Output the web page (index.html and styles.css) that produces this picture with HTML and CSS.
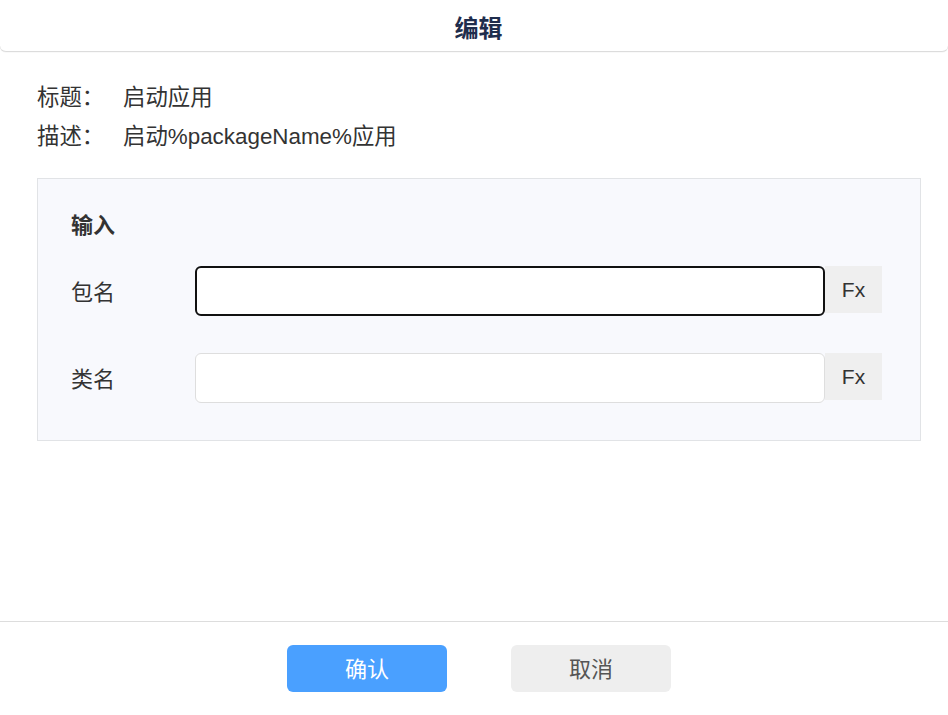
FILE: index.html
```html
<!DOCTYPE html>
<html lang="zh">
<head>
<meta charset="utf-8">
<title>编辑</title>
<link rel="stylesheet" href="styles.css">
</head>
<body>
<div class="page">
  <header class="header">编辑</header>
  <div class="content">
    <div class="info">
      <div class="info-row"><span class="info-label">标题：</span><span>启动应用</span></div>
      <div class="info-row"><span class="info-label">描述：</span><span>启动%packageName%应用</span></div>
    </div>
    <section class="panel">
      <div class="panel-title">输入</div>
      <div class="field">
        <label class="field-label">包名</label>
        <div class="input focused"></div>
        <div class="fx">Fx</div>
      </div>
      <div class="field">
        <label class="field-label">类名</label>
        <div class="input"></div>
        <div class="fx">Fx</div>
      </div>
    </section>
  </div>
  <footer class="footer">
    <button class="btn btn-primary">确认</button>
    <button class="btn btn-default">取消</button>
  </footer>
</div>
</body>
</html>
```

FILE: styles.css
```css
html, body {
  margin: 0;
  padding: 0;
  background: #ffffff;
}
body {
  font-family: "Liberation Sans", "Noto Sans CJK SC", sans-serif;
  color: #333333;
}
.page {
  height: 715px;
  display: flex;
  flex-direction: column;
}
.header {
  height: 52px;
  box-sizing: border-box;
  display: flex;
  align-items: center;
  justify-content: center;
  font-size: 24px;
  font-weight: bold;
  color: #1f2d4d;
  border-bottom: 1px solid #dcdcdc;
  border-radius: 0 0 6px 6px;
  box-shadow: 0 0 1px rgba(0,0,0,0.25);
  padding-top: 2px;
  padding-left: 9px;
}
.content {
  flex: 1;
  padding: 0 28px 0 37px;
}
.info {
  padding-top: 26px;
}
.info-row {
  display: flex;
  font-size: 22.4px;
  line-height: 39px;
  color: #333;
}
.info-label {
  width: 86px;
  flex: none;
}
.panel {
  margin-top: 22px;
  box-sizing: border-box;
  width: 884px;
  height: 263px;
  background: #f8f9fd;
  border: 1px solid #e1e3e6;
  padding: 30px 38px 0 33px;
}
.panel-title {
  font-size: 22px;
  font-weight: bold;
  line-height: 34px;
  color: #333;
  margin-bottom: 23px;
}
.field {
  display: flex;
  align-items: flex-start;
  margin-bottom: 35px;
}
.field-label {
  width: 124px;
  flex: none;
  font-size: 22px;
  line-height: 50px;
  color: #333;
  padding-top: 2px;
}
.input {
  width: 630px;
  height: 50px;
  box-sizing: border-box;
  background: #fff;
  border: 1px solid #dedede;
  border-radius: 6px;
}
.input.focused {
  border: 2px solid #111;
}
.fx {
  width: 57px;
  height: 47px;
  background: #efefef;
  display: flex;
  align-items: center;
  justify-content: center;
  font-size: 21px;
  color: #333;
}
.footer {
  height: 94px;
  box-sizing: border-box;
  border-top: 1px solid #dddddd;
  display: flex;
  justify-content: center;
  align-items: flex-start;
  gap: 64px;
  padding-top: 23px;
  padding-left: 10px;
}
.btn {
  width: 160px;
  height: 47px;
  border: none;
  border-radius: 6px;
  font-family: "Liberation Sans", "Noto Sans CJK SC", sans-serif;
  font-size: 22px;
  padding: 0 0 4px 0;
}
.btn-primary {
  background: #4aa0ff;
  color: #fff;
}
.btn-default {
  background: #eeeeee;
  color: #555;
}
```
